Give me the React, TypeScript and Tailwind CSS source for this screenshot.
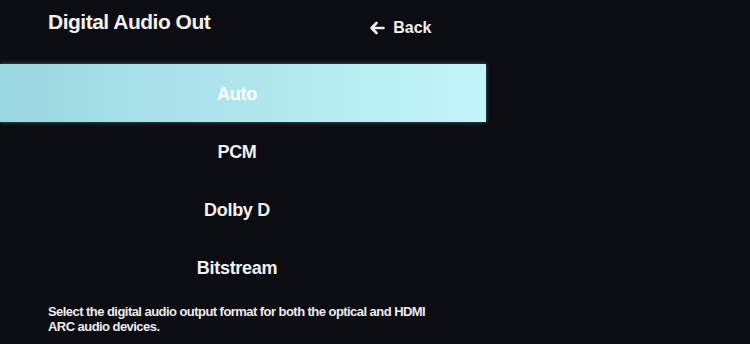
import React from 'react';

const options = ['Auto', 'PCM', 'Dolby D', 'Bitstream'];

const App: React.FC = () => {
  const selected = 'Auto';

  return (
    <div className="w-[750px] h-[344px] bg-[#0c0d13] text-white overflow-hidden font-['Liberation_Sans',Arial,sans-serif]">
      <div className="flex items-start h-[64px]">
        <h1 className="pl-[48px] pt-[8px] text-[21px] font-bold tracking-[-0.5px] text-[#f2f2f2] leading-[28px]">
          Digital Audio Out
        </h1>
        <button className="ml-[159px] mt-[16px] flex items-center gap-[8px] text-[16px] font-bold text-[#f0f0f0]">
          <svg width="16" height="14" viewBox="0 0 16 14" fill="none" stroke="currentColor" strokeWidth="2.6" strokeLinecap="round" strokeLinejoin="round">
            <path d="M14.5 7H2.5M7.5 2L2.5 7l5 5" />
          </svg>
          Back
        </button>
      </div>

      <ul className="w-[486px]">
        {options.map(opt => (
          <li
            key={opt}
            className={`h-[58px] flex items-center justify-center pr-[12px] pt-[3px] text-[18px] font-bold tracking-[-0.3px] ${
              opt === selected
                ? 'bg-gradient-to-r from-[#9bd7e1] to-[#c2f5f8] text-white shadow-[0_0_4px_rgba(160,230,240,0.4)]'
                : 'text-[#f2f2f2]'
            }`}
          >
            {opt}
          </li>
        ))}
      </ul>

      <p className="pl-[48px] mt-[8px] text-[13px] font-bold leading-[15px] tracking-[-0.55px] text-[#ececec]">
        Select the digital audio output format for both the optical and HDMI
        <br />
        ARC audio devices.
      </p>
    </div>
  );
};

export default App;
